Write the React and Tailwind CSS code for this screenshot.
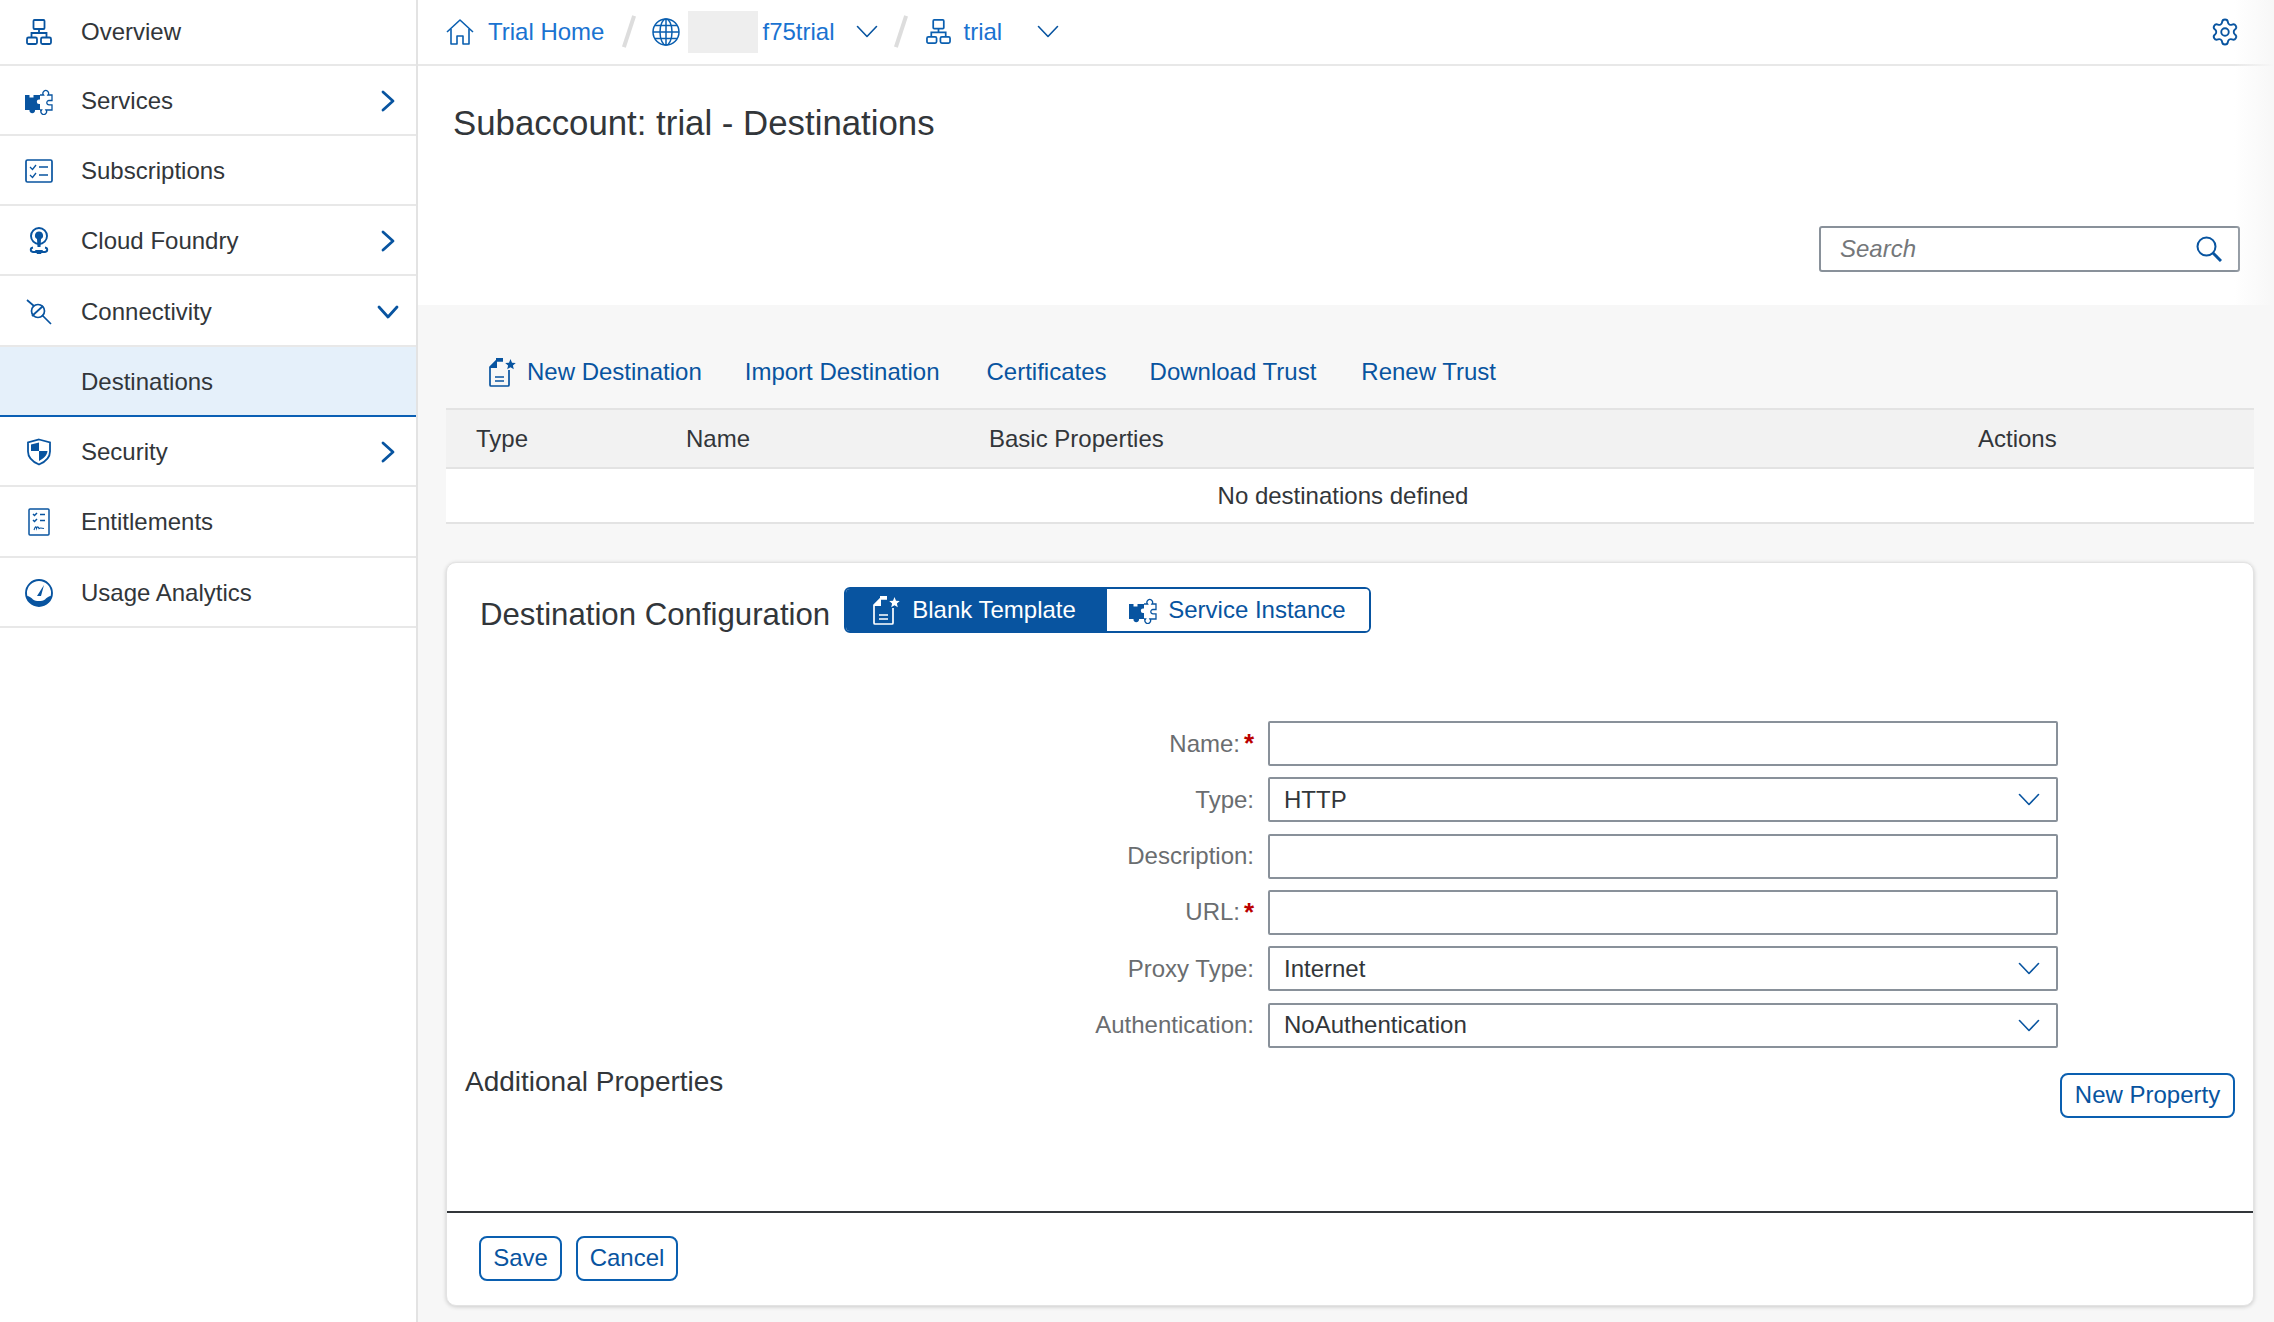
import { Settings } from "lucide-react";

const B = "#0854a0";

const OrgIcon = ({ className = "w-[26px] h-[26px]", color = B }) => (
  <svg viewBox="0 0 26 26" className={className} fill="none" stroke={color} strokeWidth="1.8">
    <rect x="7.500" y="1" width="11" height="9" rx="1" />
    <path d="M13 10v4M5.500 18.500V14h15v4.500" />
    <rect x="1" y="18.500" width="10" height="6.500" rx="1.500" />
    <rect x="15" y="18.500" width="10" height="6.500" rx="1.500" />
  </svg>
);

const PuzzleIcon = ({ color = B }) => (
  <svg viewBox="0 0 28 28" className="w-[28px] h-[28px]" fill="none" stroke={color} strokeWidth="1.300">
    <path fill={color} stroke="none" d="M0 8h4.500V10.500h4V8H15v4.500h-1a2.200 2.200 0 1 0 0 4.400h1V23h-5a2.800 2.800 0 1 1-5.500 0H0z" />
    <path d="M15 8h3.500a2.800 2.800 0 1 1 4.500 0h4v5.500h-3a2.200 2.200 0 1 0 0 4.400h3V23h-6a2.800 2.800 0 1 1-4.500 0H15" />
  </svg>
);

const DocStar = ({ color = B }) => (
  <svg viewBox="0 0 28 30" className="w-[28px] h-[30px]" fill="none" stroke={color} strokeWidth="1.700">
    <path d="M15 4H8L2 10v18a1 1 0 0 0 1 1h17a1 1 0 0 0 1-1V13" />
    <path fill={color} stroke="none" d="M9 2v9H1.500z M8 1h7v3H8z" />
    <path d="M7 20h9M7 24h9" />
    <path fill={color} stroke="none" d="M22.500 2l1.500 3.700 3.800.3-2.900 2.500.9 3.800-3.300-2-3.300 2 .9-3.800L17.200 6l3.800-.3z" />
  </svg>
);

const Chevron = ({ dir }) =>
  dir === "right" ? (
    <svg viewBox="0 0 14 22" className="w-[14px] h-[22px]" fill="none" stroke={B} strokeWidth="2.800" strokeLinecap="round" strokeLinejoin="round">
      <path d="M2 2l10 9-10 9" />
    </svg>
  ) : (
    <svg viewBox="0 0 22 14" className="w-[22px] h-[14px]" fill="none" stroke={B} strokeWidth="2.800" strokeLinecap="round" strokeLinejoin="round">
      <path d="M2 2l9 10 9-10" />
    </svg>
  );

const ThinDown = ({ className = "w-[22px] h-[13px]" }) => (
  <svg viewBox="0 0 22 13" className={className} fill="none" stroke={B} strokeWidth="1.600" strokeLinecap="round" strokeLinejoin="round">
    <path d="M1.500 1.500L11 11.500l9.500-10" />
  </svg>
);

const SubsIcon = () => (
  <svg viewBox="0 0 28 24" className="w-[28px] h-[24px]" fill="none" stroke={B} strokeWidth="1.700">
    <rect x="1" y="1" width="26" height="22" rx="1.500" />
    <path d="M5 8l2.500 2.500L11 6M5 16l2.500 2.500L11 14" strokeWidth="1.300" />
    <path d="M14 8h9M14 16h9" />
  </svg>
);

const CloudIcon = () => (
  <svg viewBox="0 0 20 28" className="w-[20px] h-[28px]" fill="none" stroke={B} strokeWidth="1.900">
    <circle cx="10" cy="9" r="8" />
    <path fill={B} stroke="none" d="M10 4.500a4 4 0 0 1 2 7.500L11.500 20h-3L8 12a4 4 0 0 1 2-7.500z" />
    <path d="M4 20.500c-3 .5-3 4 0 4.500h12c3-.5 3-4 0-4.500" />
    <path fill={B} stroke="none" d="M6 23h8l-2 4H8z" />
  </svg>
);

const PlugIcon = () => (
  <svg viewBox="0 0 26 26" className="w-[26px] h-[26px]" fill="none" stroke={B} strokeWidth="1.700">
    <path d="M1 1l7 6M16 16l9 9" />
    <circle cx="12" cy="12" r="6.500" />
    <path d="M6 17L17 7" />
  </svg>
);

const ShieldIcon = () => (
  <svg viewBox="0 0 26 28" className="w-[26px] h-[28px]" fill="none" stroke={B} strokeWidth="1.800">
    <path d="M13 1.500l11 3v9c0 6-5 10.500-11 13C7 24 2 19.500 2 13.500v-9z" />
    <path fill={B} stroke="none" d="M5 6.500l8-2V13H5z M13 13h8.500c-.3 4.500-4 7.500-8.500 10z" />
  </svg>
);

const EntIcon = () => (
  <svg viewBox="0 0 22 28" className="w-[22px] h-[28px]" fill="none" stroke={B} strokeWidth="1.500">
    <rect x="1" y="1" width="20" height="26" rx="1" />
    <path d="M5 6l1.500 1.500L9 5M5 12l1.500 1.500L9 11M12 6.500h5M12 12.500h5" />
    <path d="M6 22c1.500-4 2-4 2.500-1.500 1-3 2-1 2.500 0 1-1 3-.5 5 0" strokeWidth="1.100" />
  </svg>
);

const GaugeIcon = () => (
  <svg viewBox="0 0 28 28" className="w-[28px] h-[28px]" fill="none" stroke={B} strokeWidth="1.900">
    <circle cx="14" cy="14" r="13" />
    <path fill={B} stroke="none" d="M1.500 17c3 0 5 2 6.500 3.500 3 2 9 2 12 0 1.500-1.500 3.500-3.500 6.500-3.500C25 23 20 27 14 27S3 23 1.500 17z" />
    <path fill={B} stroke="none" d="M19 6l-3 11h-4z" />
  </svg>
);

const nav = [
  { label: "Overview", icon: <OrgIcon />, h: "h-[65.500px]" },
  { label: "Services", icon: <PuzzleIcon />, chev: "right" },
  { label: "Subscriptions", icon: <SubsIcon /> },
  { label: "Cloud Foundry", icon: <CloudIcon />, chev: "right" },
  { label: "Connectivity", icon: <PlugIcon />, chev: "down" },
  { label: "Destinations", active: true },
  { label: "Security", icon: <ShieldIcon />, chev: "right" },
  { label: "Entitlements", icon: <EntIcon /> },
  { label: "Usage Analytics", icon: <GaugeIcon /> },
];

const NavRow = ({ item }) => (
  <div
    className={`flex items-center shrink-0 border-b-2 ${item.h ? item.h : "h-[70.300px] pt-[2px]"} ${
      item.active ? "bg-[#e5f0fa] border-[#0a5fb4]" : "border-[#e8e8e8]"
    }`}
  >
    <div className="w-[78px] flex justify-center shrink-0">{item.icon}</div>
    <span className="ml-[3px] flex-1 text-[24px] text-[#32363a]">{item.label}</span>
    {item.chev && (
      <div className="w-[22px] mr-[17px] flex justify-center shrink-0">
        <Chevron dir={item.chev} />
      </div>
    )}
  </div>
);

const Slash = () => <span className="block w-[4px] h-[33px] bg-[#dddddd] rotate-[18deg] shrink-0" />;

const Field = ({ label, req, value, select }) => (
  <div className="flex items-center h-[45px]">
    <div className="w-[821px] flex justify-end items-center pr-[14px] text-[24px] text-[#6a6d70]">
      <span>{label}</span>
      {req && <span className="text-[#bb0000] text-[26px] font-bold w-[14px] text-right">*</span>}
    </div>
    <div className="w-[790px] h-[45px] flex items-center justify-between pl-[14px] pr-[16px] border-2 border-[#89919a] rounded-[2px] bg-white text-[24px] text-[#32363a]">
      <span>{value}</span>
      {select && <ThinDown />}
    </div>
  </div>
);

const OutlineBtn = ({ children, className = "" }) => (
  <button className={`h-[45px] flex items-center justify-center border-2 border-[#0a5fb0] rounded-[8px] bg-white text-[24px] text-[#0854a0] ${className}`}>
    {children}
  </button>
);

export default function App() {
  return (
    <div className="relative flex w-[2274px] h-[1322px] overflow-hidden bg-white font-['Liberation_Sans',Arial,sans-serif]">
      <aside className="w-[418px] shrink-0 h-full border-r-2 border-[#e3e3e3] flex flex-col bg-white">
        {nav.map((n) => (
          <NavRow key={n.label} item={n} />
        ))}
      </aside>

      <main className="flex-1 flex flex-col h-full bg-[#f7f7f7]">
        <header className="h-[65.500px] shrink-0 flex items-center bg-white border-b-2 border-[#e8e8e8] pl-[28px] pr-[34px] text-[24px] text-[#1a73d1]">
          <svg viewBox="0 0 28 26" className="w-[28px] h-[26px] shrink-0" fill="none" stroke="#0a5fb0" strokeWidth="1.600" strokeLinejoin="round">
            <path d="M1 13L14 1l13 12" />
            <path d="M5 10v15h6v-8h6v8h6V10" />
          </svg>
          <span className="ml-[14px]">Trial Home</span>
          <span className="ml-[23px]"><Slash /></span>
          <svg viewBox="0 0 28 28" className="ml-[21px] w-[28px] h-[28px] shrink-0" fill="none" stroke="#0a5fb0" strokeWidth="1.500">
            <circle cx="14" cy="14" r="13" />
            <ellipse cx="14" cy="14" rx="6" ry="13" />
            <path d="M14 1v26M1 14h26M3 7.500h22M3 20.500h22" />
          </svg>
          <span className="ml-[8px] w-[70px] h-[42px] bg-[#eeeeee] shrink-0" />
          <span className="ml-[4px]">f75trial</span>
          <span className="ml-[21px]"><ThinDown /></span>
          <span className="ml-[21px]"><Slash /></span>
          <span className="ml-[23px]"><OrgIcon className="block w-[25px] h-[25px]" color="#0a5fb0" /></span>
          <span className="ml-[13px]">trial</span>
          <span className="ml-[35px]"><ThinDown /></span>
          <Settings className="ml-auto w-[30px] h-[30px] shrink-0 text-[#0854a0]" strokeWidth={1.500} />
        </header>

        <section className="h-[239px] shrink-0 bg-white flex flex-col pl-[35px] pr-[34px]">
          <h1 className="mt-[32px] text-[34.800px] leading-[50px] text-[#32363a]">Subaccount: trial - Destinations</h1>
          <div className="mt-[78px] self-end w-[421px] h-[46px] flex items-center justify-between pl-[19px] pr-[16px] border-2 border-[#89919a] rounded-[3px] bg-white">
            <span className="italic text-[24px] text-[#74777a]">Search</span>
            <svg viewBox="0 0 26 26" className="w-[26px] h-[26px]" fill="none" stroke={B} strokeWidth="2">
              <circle cx="10.500" cy="10.500" r="9" />
              <path d="M17 17l8 8" strokeWidth="3" />
            </svg>
          </div>
        </section>

        <div className="flex-1 flex flex-col pl-[28px] pr-[20px]">
          <div className="h-[103px] shrink-0 flex items-center pt-[32px] pl-[42px] text-[24px] text-[#0854a0]">
            <DocStar />
            <span className="ml-[11px]">New Destination</span>
            <span className="ml-[43px]">Import Destination</span>
            <span className="ml-[47px]">Certificates</span>
            <span className="ml-[43px]">Download Trust</span>
            <span className="ml-[45px]">Renew Trust</span>
          </div>

          <div className="h-[61px] shrink-0 grid grid-cols-[210px_303px_989px_1fr] items-center pt-[1px] pl-[30px] bg-[#f2f2f2] border-y-2 border-[#e3e3e3] text-[24px] text-[#32363a]">
            <span>Type</span>
            <span>Name</span>
            <span>Basic Properties</span>
            <span>Actions</span>
          </div>
          <div className="h-[55px] shrink-0 flex items-center justify-center pt-[2px] pr-[14px] bg-white border-b-2 border-[#e3e3e3] text-[24px] text-[#32363a]">
            No destinations defined
          </div>

          <div className="mt-[38px] h-[744px] shrink-0 flex flex-col bg-white rounded-[10px] border border-[#e3e3e3] shadow-[0_1px_4px_rgba(0,0,0,0.18)]">
            <div className="flex items-start pt-[24px] pl-[33px]">
              <h2 className="mt-[8px] text-[31.200px] leading-[40px] text-[#32363a]">Destination Configuration</h2>
              <div className="ml-[14px] flex h-[46px] rounded-[6px] border-2 border-[#0854a0] overflow-hidden text-[24px]">
                <div className="w-[261px] flex items-center pt-[1px] pl-[26px] bg-[#0854a0] text-white">
                  <DocStar color="#ffffff" />
                  <span className="ml-[12px]">Blank Template</span>
                </div>
                <div className="w-[262px] flex items-center pt-[1px] pl-[22px] bg-white text-[#0854a0]">
                  <PuzzleIcon />
                  <span className="ml-[11px]">Service Instance</span>
                </div>
              </div>
            </div>

            <div className="mt-[86.600px] flex flex-col gap-[11.300px]">
              <Field label="Name:" req />
              <Field label="Type:" value="HTTP" select />
              <Field label="Description:" />
              <Field label="URL:" req />
              <Field label="Proxy Type:" value="Internet" select />
              <Field label="Authentication:" value="NoAuthentication" select />
            </div>

            <div className="flex items-start justify-between mt-[25.400px] pl-[18px] pr-[18px]">
              <span className="mt-[-11px] text-[28px] leading-[40px] text-[#32363a]">Additional Properties</span>
              <OutlineBtn className="w-[175px]">New Property</OutlineBtn>
            </div>

            <div className="mt-[93px] border-t-2 border-[#32363a] flex gap-[14px] pt-[23px] pl-[32px]">
              <OutlineBtn className="w-[83px]">Save</OutlineBtn>
              <OutlineBtn className="w-[102px]">Cancel</OutlineBtn>
            </div>
          </div>
        </div>
      </main>

      <div className="absolute top-0 right-0 w-[40px] h-[305px] pointer-events-none bg-gradient-to-r from-transparent to-[#f7f7f7]" />
    </div>
  );
}
